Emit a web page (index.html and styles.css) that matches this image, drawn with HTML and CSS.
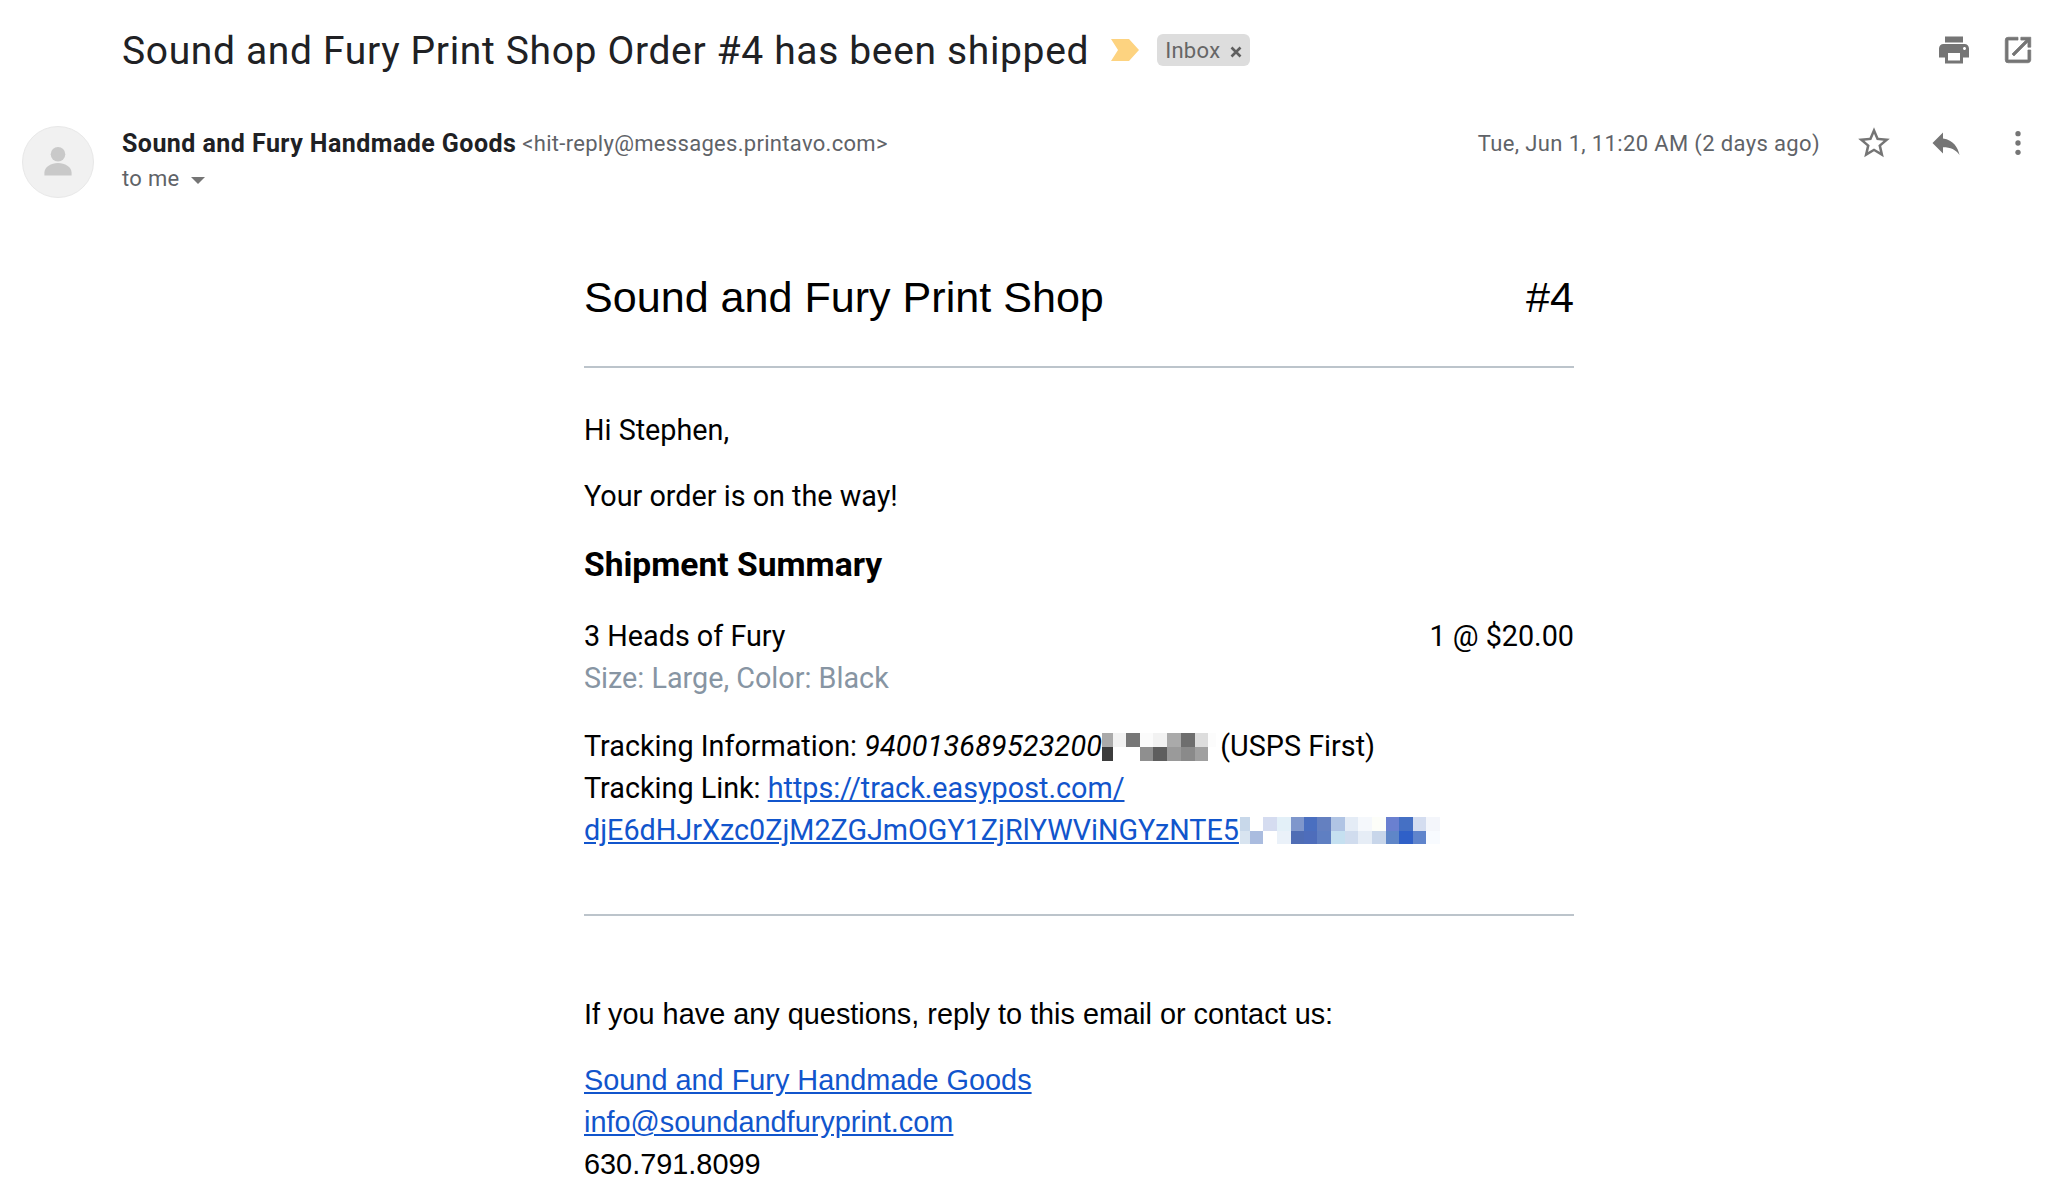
FILE: index.html
```html
<!DOCTYPE html>
<html lang="en">
<head>
<meta charset="utf-8">
<title>Sound and Fury Print Shop Order #4 has been shipped</title>
<link rel="stylesheet" href="styles.css">
</head>
<body>
<header class="subject-row">
  <h1 class="subject">Sound and Fury Print Shop Order #4 has been shipped</h1>
  <svg class="marker" viewBox="0 0 28 22"><path d="M0 0h18l10 11-10 11H0l7-11z" fill="#fdd380"/></svg>
  <span class="tag">Inbox<svg class="tag-x" viewBox="0 0 12 12"><path d="M1.5 1.5l9 9M10.5 1.5l-9 9" stroke="#5f5f5f" stroke-width="2.6" fill="none"/></svg></span>
  <div class="subject-actions">
    <svg class="icon-print" viewBox="0 0 24 24"><path d="M19 8H5c-1.66 0-3 1.34-3 3v6h4v4h12v-4h4v-6c0-1.66-1.34-3-3-3zm-3 11H8v-5h8v5zm3-7c-.55 0-1-.45-1-1s.45-1 1-1 1 .45 1 1-.45 1-1 1zm-1-9H6v4h12V3z" fill="#757575"/></svg>
    <svg class="icon-open" viewBox="0 0 24 24"><path d="M19 19H5V5h7V3H5a2 2 0 0 0-2 2v14a2 2 0 0 0 2 2h14c1.1 0 2-.9 2-2v-7h-2v7zM14 3v2h3.59l-9.83 9.83 1.41 1.41L19 6.41V10h2V3h-7z" fill="#757575" stroke="#757575" stroke-width=".5"/></svg>
  </div>
</header>
<section class="sender-row">
  <div class="avatar">
    <svg viewBox="0 0 72 72"><circle cx="36" cy="28" r="7.5" fill="#c9c9c9"/><path d="M22 47c0-6 7-10 14-10s14 4 14 10v3H22z" fill="#c9c9c9"/></svg>
  </div>
  <div class="sender-info">
    <div class="sender-line"><span class="sender-name">Sound and Fury Handmade Goods</span> <span class="sender-mail">&lt;hit-reply@messages.printavo.com&gt;</span></div>
    <div class="to-line">to me <span class="caret"></span></div>
  </div>
  <div class="meta">
    <span class="date">Tue, Jun 1, 11:20 AM (2 days ago)</span>
    <svg class="icon-star" viewBox="0 0 24 24"><path d="M22 9.24l-7.19-.62L12 2 9.19 8.63 2 9.24l5.46 4.73L5.82 21 12 17.27 18.18 21l-1.63-7.03L22 9.24zM12 15.4l-3.76 2.27 1-4.28-3.32-2.88 4.38-.38L12 6.1l1.71 4.04 4.38.38-3.32 2.88 1 4.28L12 15.4z" fill="#757575"/></svg>
    <svg class="icon-reply" viewBox="0 0 24 24"><path d="M10 9V5l-7 7 7 7v-4.1c5 0 8.5 1.6 11 5.1-1-5-4-10-11-11z" fill="#757575"/></svg>
    <svg class="icon-more" viewBox="0 0 24 24"><circle cx="12" cy="5" r="2" fill="#757575"/><circle cx="12" cy="12" r="2" fill="#757575"/><circle cx="12" cy="19" r="2" fill="#757575"/></svg>
  </div>
</section>
<main class="mail">
  <div class="mail-head"><span>Sound and Fury Print Shop</span><span>#4</span></div>
  <hr class="rule">
  <p class="para first">Hi Stephen,</p>
  <p class="para">Your order is on the way!</p>
  <h2 class="summary">Shipment Summary</h2>
  <div class="item"><span>3 Heads of Fury</span><span>1 @ $20.00</span></div>
  <div class="item-note">Size: Large, Color: Black</div>
  <div class="tracking">
    <div class="line">Tracking Information: <em>940013689523200</em><svg class="pix-dark" viewBox="0 0 341 84" shape-rendering="crispEdges"><rect x="0" y="0" width="32" height="42" fill="#aaa"/><rect x="32" y="0" width="40" height="42" fill="#f2f2f2"/><rect x="72" y="0" width="42" height="42" fill="#777"/><rect x="114" y="0" width="39" height="42" fill="#fbfbfb"/><rect x="153" y="0" width="42" height="42" fill="#f2f2f2"/><rect x="195" y="0" width="42" height="42" fill="#aaa"/><rect x="237" y="0" width="42" height="42" fill="#6e6e6e"/><rect x="279" y="0" width="38" height="42" fill="#ddd"/><rect x="317" y="0" width="24" height="42" fill="#fcfcfc"/><rect x="0" y="42" width="32" height="42" fill="#3c3c3c"/><rect x="114" y="42" width="39" height="42" fill="#8f8f8f"/><rect x="153" y="42" width="42" height="42" fill="#5e5e5e"/><rect x="195" y="42" width="42" height="42" fill="#9a9a9a"/><rect x="237" y="42" width="42" height="42" fill="#8a8a8a"/><rect x="279" y="42" width="38" height="42" fill="#a0a0a0"/></svg> (USPS First)</div>
    <div class="line">Tracking Link: <a href="#">https://track.easypost.com/</a></div>
    <div class="line"><a href="#">djE6dHJrXzc0ZjM2ZGJmOGY1ZjRlYWViNGYzNTE5</a><svg class="pix-blue" viewBox="0 0 605 82" shape-rendering="crispEdges"><rect x="0" y="0" width="30" height="41" fill="#c8d8ea"/><rect x="69" y="0" width="42" height="41" fill="#d5dcf0"/><rect x="111" y="0" width="42" height="41" fill="#e3f0f8"/><rect x="153" y="0" width="40" height="41" fill="#7f97cc"/><rect x="193" y="0" width="41" height="41" fill="#4a6fc0"/><rect x="234" y="0" width="42" height="41" fill="#6480c0"/><rect x="276" y="0" width="42" height="41" fill="#b0c4e4"/><rect x="318" y="0" width="40" height="41" fill="#e4ecf6"/><rect x="358" y="0" width="42" height="41" fill="#f5f8fc"/><rect x="400" y="0" width="41" height="41" fill="#fdfef9"/><rect x="441" y="0" width="40" height="41" fill="#6a80d0"/><rect x="481" y="0" width="42" height="41" fill="#4570c4"/><rect x="523" y="0" width="40" height="41" fill="#d4ddf0"/><rect x="563" y="0" width="42" height="41" fill="#f4f6fb"/><rect x="0" y="41" width="30" height="41" fill="#d8e4f0"/><rect x="30" y="41" width="39" height="41" fill="#aabcdf"/><rect x="111" y="41" width="42" height="41" fill="#eaf1f9"/><rect x="153" y="41" width="40" height="41" fill="#4f6db5"/><rect x="193" y="41" width="41" height="41" fill="#4e6dbb"/><rect x="234" y="41" width="42" height="41" fill="#5f7fc2"/><rect x="276" y="41" width="42" height="41" fill="#c5e0f0"/><rect x="318" y="41" width="40" height="41" fill="#d0dcee"/><rect x="358" y="41" width="42" height="41" fill="#e6edf6"/><rect x="400" y="41" width="41" height="41" fill="#c8d6ea"/><rect x="441" y="41" width="40" height="41" fill="#5f86c8"/><rect x="481" y="41" width="42" height="41" fill="#2f60c8"/><rect x="523" y="41" width="40" height="41" fill="#5f84cc"/><rect x="563" y="41" width="42" height="41" fill="#f8fbff"/></svg></div>
  </div>
  <hr class="rule second">
  <div class="footer">
    <p class="para question">If you have any questions, reply to this email or contact us:</p>
    <div class="contact">
      <div class="line"><a href="#">Sound and Fury Handmade Goods</a></div>
      <div class="line"><a href="#">info@soundandfuryprint.com</a></div>
      <div class="line">630.791.8099</div>
    </div>
  </div>
</main>
</body>
</html>
```
FILE: styles.css
```css
html, body { margin: 0; padding: 0; background: #fff; }
body { width: 2058px; height: 1192px; overflow: hidden; font-family: Roboto, "Liberation Sans", sans-serif; color: #000; }

.subject-row { display: flex; align-items: center; height: 100px; padding: 0 23px 0 122px; }
.subject { margin: 1px 0 0; font-size: 39px; font-weight: 400; letter-spacing: .65px; color: #202124; white-space: nowrap; font-family: Roboto, sans-serif; }
.marker { width: 28px; height: 22px; margin-left: 22px; }
.tag { display: inline-flex; align-items: center; height: 32px; margin-left: 18px; padding: 0 8px; border-radius: 6px; background: #ddd; color: #666; font-size: 22px; letter-spacing: .3px; }
.tag-x { width: 12px; height: 12px; margin: 3px 0 0 10px; }
.subject-actions { display: flex; gap: 29px; margin-left: auto; align-items: center; }
.icon-print { width: 36px; height: 36px; }
.icon-open { width: 34px; height: 34px; }

.sender-row { display: flex; align-items: flex-start; padding: 26px 24px 0 22px; height: 78px; }
.avatar { width: 72px; height: 72px; box-sizing: border-box; border: 1px solid #e8e8e8; border-radius: 50%; background: #f1f1f1; flex: none; }
.avatar svg { display: block; width: 70px; height: 70px; }
.sender-info { margin-left: 28px; flex: 1; }
.sender-line { line-height: 30px; margin-top: 3px; }
.sender-name { font-size: 25px; font-weight: 700; letter-spacing: .45px; color: #202124; }
.sender-mail { font-size: 22px; letter-spacing: .3px; color: #5f6368; margin-left: 2px; vertical-align: 1px; }
.to-line { font-size: 22px; line-height: 30px; margin-top: 2px; letter-spacing: .3px; color: #5f6368; }
.caret { display: inline-block; width: 0; height: 0; margin-left: 6px; border-style: solid; border-width: 7px 7px 0; border-color: #757575 transparent transparent; vertical-align: middle; }
.meta { display: flex; align-items: center; margin-top: 2px; height: 30px; }
.date { font-size: 22px; letter-spacing: .36px; color: #5f6368; margin-right: 35px; }
.icon-star { width: 38px; height: 38px; margin-right: 35px; }
.icon-reply { width: 36px; height: 36px; margin-right: 38px; }
.icon-more { width: 32px; height: 32px; }

.mail { width: 990px; margin: 0 0 0 584px; padding-top: 67px; font-size: 28.75px; line-height: 42px; }
.mail-head { display: flex; justify-content: space-between; font-family: "Liberation Sans", Arial, sans-serif; font-size: 43.1px; line-height: 52px; }
.rule { border: 0; border-top: 2px solid #bcc4cb; margin: 43px 0 0; }
.para { margin: 0; }
.para.first { margin-top: 41px; }
.para + .para { margin-top: 24px; }
.summary { margin: 27px 0 0; font-size: 33.6px; line-height: 42px; font-weight: 700; }
.item { display: flex; justify-content: space-between; margin-top: 29px; }
.item-note { color: #8795a3; }
.tracking { margin-top: 26px; }
.line { white-space: nowrap; }
em { font-style: italic; letter-spacing: .2px; }
a { color: #1155cc; }
.pix-dark { display: inline-block; width: 114px; height: 28px; vertical-align: -5px; margin-right: -3px; }
.pix-blue { display: inline-block; width: 202px; height: 27px; vertical-align: -4px; }
.rule.second { margin-top: 63px; }
.footer { font-family: "Liberation Sans", Arial, sans-serif; font-size: 28.875px; }
.para.question { margin-top: 77px; }
.contact { margin-top: 24px; }
```
